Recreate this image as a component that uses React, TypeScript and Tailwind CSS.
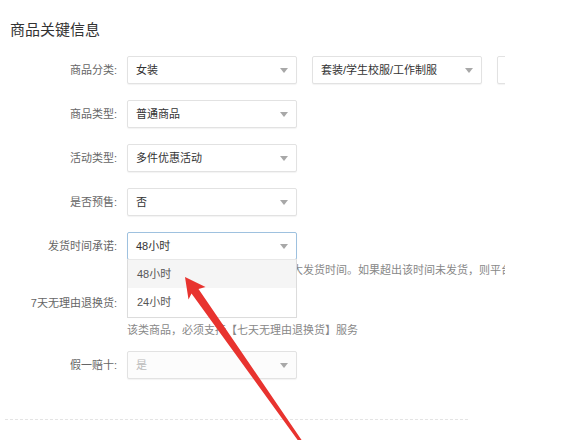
import React from "react";

const font = { fontFamily: '"Liberation Sans", "Noto Sans CJK SC", sans-serif' };

function Caret() {
  return (
    <svg width="8" height="5" viewBox="0 0 8 5" className="shrink-0">
      <path d="M0 0 L8 0 L4 5 Z" fill="#a8a8a8" />
    </svg>
  );
}

function Select({
  value,
  width = "w-[170px]",
  focused = false,
  disabled = false,
}: {
  value: string;
  width?: string;
  focused?: boolean;
  disabled?: boolean;
}) {
  return (
    <div
      className={`${width} h-[28px] shrink-0 flex items-center justify-between pl-[8px] pr-[8px] rounded-[2px] border shadow-[0_1px_1px_rgba(0,0,0,0.05)] ${
        focused ? "border-[#9ec1df]" : "border-[#e2e2e2]"
      } ${disabled ? "bg-[#fcfcfc] text-[#bbbbbb]" : "bg-white text-[#333]"}`}
    >
      <span className="text-[11px] leading-none">{value}</span>
      <Caret />
    </div>
  );
}

function Label({ text }: { text: string }) {
  return (
    <div className="w-[127px] shrink-0 pr-[10px] text-right text-[11px] leading-[28px] text-[#666]">
      {text}
    </div>
  );
}

export default function App() {
  return (
    <div className="relative w-[563px] h-[440px] overflow-hidden bg-white" style={font}>
      <div className="w-[505px] overflow-hidden">
        <div className="pt-[20px] pl-[10px] text-[15px] leading-[20px] text-[#333]">
          商品关键信息
        </div>

        <div className="mt-[16px]">
          <div className="flex mb-[16px]">
            <Label text="商品分类:" />
            <div className="flex gap-[15px]">
              <Select value="女装" />
              <Select value="套装/学生校服/工作制服" />
              <Select value="" />
            </div>
          </div>

          <div className="flex mb-[16px]">
            <Label text="商品类型:" />
            <Select value="普通商品" />
          </div>

          <div className="flex mb-[16px]">
            <Label text="活动类型:" />
            <Select value="多件优惠活动" />
          </div>

          <div className="flex mb-[16px]">
            <Label text="是否预售:" />
            <Select value="否" />
          </div>

          <div className="flex mb-[12px]">
            <Label text="发货时间承诺:" />
            <div className="relative">
              <Select value="48小时" focused />
              <div className="mt-[3px] text-[11px] leading-[14px] text-[#888] whitespace-nowrap">
                请设置买家付款后商家所承诺的最大发货时间。如果超出该时间未发货，则平台将会介入处理
              </div>
              <div className="absolute left-0 top-[27px] z-10 w-[170px] bg-white border border-[#dcdcdc] border-t-[#e8e8e8]">
                <div className="h-[28px] pl-[9px] flex items-center bg-[#f5f5f5] text-[11px] text-[#555]">
                  48小时
                </div>
                <div className="h-[29px] pl-[9px] flex items-center text-[11px] text-[#555]">
                  24小时
                </div>
              </div>
            </div>
          </div>

          <div className="flex mb-[14px]">
            <Label text="7天无理由退换货:" />
            <div>
              <Select value="是" />
              <div className="mt-[6px] text-[11px] leading-[14px] text-[#888] whitespace-nowrap">
                该类商品，必须支持【七天无理由退换货】服务
              </div>
            </div>
          </div>

          <div className="flex">
            <Label text="假一赔十:" />
            <Select value="是" disabled />
          </div>
        </div>

        <div className="mt-[40px] ml-[5px] w-[463px] border-t border-dashed border-[#e4e4e4]" />

        <div className="mt-[20px] pl-[10px] text-[15px] leading-[20px] text-[#333]">
          商品基本信息
        </div>
      </div>

      <svg
        className="absolute left-0 top-0 pointer-events-none z-20"
        width="563"
        height="440"
        viewBox="0 0 563 440"
      >
        <polygon
          points="185,277 205.5,287 198.5,289 305,445 302,446 191.5,293.5 188.5,299.5"
          fill="#e8332f"
        />
      </svg>
    </div>
  );
}
